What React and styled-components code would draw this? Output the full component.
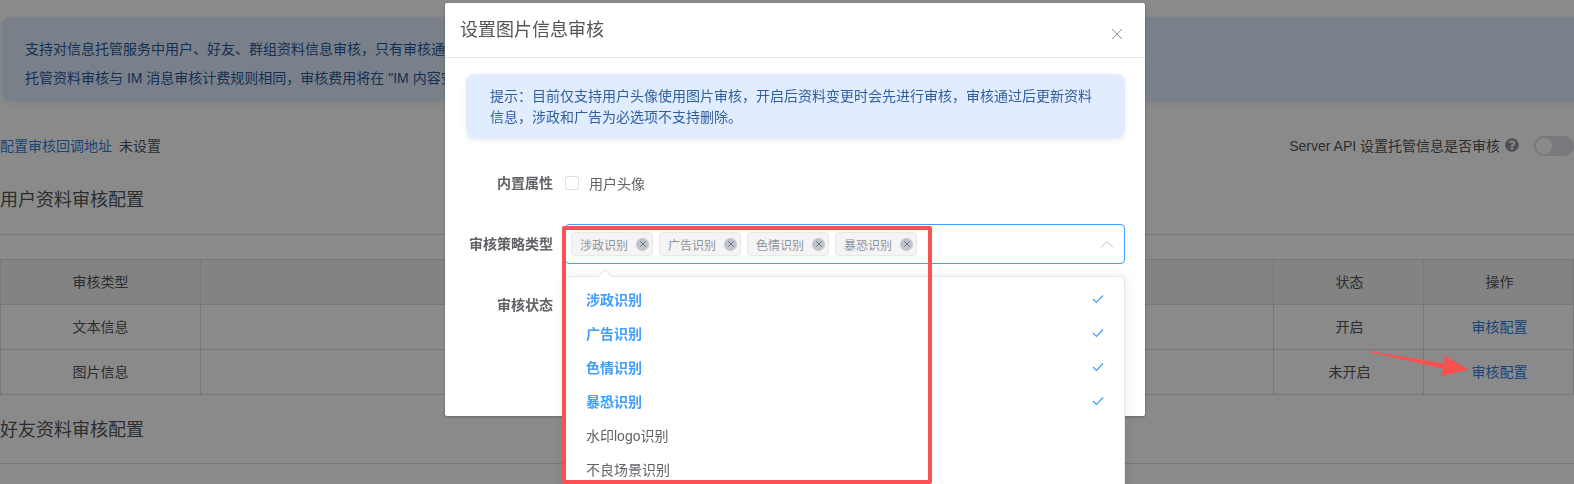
import React from 'react'
import styled, { createGlobalStyle } from 'styled-components'
import { FaQuestionCircle } from 'react-icons/fa'

const tags = ['涉政识别', '广告识别', '色情识别', '暴恐识别']
const options = [
  { label: '涉政识别', selected: true },
  { label: '广告识别', selected: true },
  { label: '色情识别', selected: true },
  { label: '暴恐识别', selected: true },
  { label: '水印logo识别' },
  { label: '不良场景识别' },
]
const rows = [
  { type: '文本信息', status: '开启' },
  { type: '图片信息', status: '未开启' },
]

export default function App() {
  return (
    <>
      <GlobalStyle />
      <Page>
        <Alert>
          <p>支持对信息托管服务中用户、好友、群组资料信息审核，只有审核通过后才会更新资料。</p>
          <p>托管资料审核与 IM 消息审核计费规则相同，审核费用将在 "IM 内容安全" 中统一结算。</p>
        </Alert>
        <ActionRow>
          <CallbackText>
            <TextLink>配置审核回调地址</TextLink>
            <Unset>未设置</Unset>
          </CallbackText>
          <ServerSwitch>
            <span>Server API 设置托管信息是否审核</span>
            <FaQuestionCircle size={14} color="#909399" />
            <Toggle />
          </ServerSwitch>
        </ActionRow>
        <SectionTitle>用户资料审核配置</SectionTitle>
        <Table>
          <colgroup>
            <col width="200" />
            <col />
            <col width="150" />
            <col width="150" />
          </colgroup>
          <thead>
            <tr>
              <th>审核类型</th>
              <th></th>
              <th>状态</th>
              <th>操作</th>
            </tr>
          </thead>
          <tbody>
            {rows.map(r => (
              <tr key={r.type}>
                <td>{r.type}</td>
                <td></td>
                <td>{r.status}</td>
                <td><TableLink>审核配置</TableLink></td>
              </tr>
            ))}
          </tbody>
        </Table>
        <SectionTitle $second>好友资料审核配置</SectionTitle>
      </Page>

      <Overlay>
        <Modal>
          <ModalHeader>
            <ModalTitle>设置图片信息审核</ModalTitle>
            <CloseIcon width="12" height="12" viewBox="0 0 12 12">
              <path d="M1 1l10 10M11 1L1 11" stroke="#909399" strokeWidth="1" fill="none" />
            </CloseIcon>
          </ModalHeader>
          <ModalBody>
            <Tip>提示：目前仅支持用户头像使用图片审核，开启后资料变更时会先进行审核，审核通过后更新资料信息，涉政和广告为必选项不支持删除。</Tip>
            <FormRow>
              <FormLabel>内置属性</FormLabel>
              <CheckOption>
                <CheckBox />
                <span>用户头像</span>
              </CheckOption>
            </FormRow>
            <FormRow>
              <FormLabel>审核策略类型</FormLabel>
              <SelectWrap>
                <SelectBox>
                  {tags.map(t => (
                    <Tag key={t}>
                      <span>{t}</span>
                      <TagClose>
                        <svg width="8" height="8" viewBox="0 0 8 8">
                          <path d="M1 1l6 6M7 1L1 7" stroke="#777a82" strokeWidth="1" fill="none" />
                        </svg>
                      </TagClose>
                    </Tag>
                  ))}
                  <Chevron width="14" height="8" viewBox="0 0 14 8">
                    <path d="M1 7.5L7 1.5l6 6" stroke="#c0c4cc" strokeWidth="1" fill="none" />
                  </Chevron>
                </SelectBox>
                <Dropdown>
                  <Caret />
                  {options.map(o => (
                    <Option key={o.label} $selected={o.selected}>
                      <span>{o.label}</span>
                      {o.selected && (
                        <svg width="12" height="10" viewBox="0 0 12 10">
                          <path d="M1 5l3.5 3.5L11 1.5" stroke="#409eff" strokeWidth="1.2" fill="none" />
                        </svg>
                      )}
                    </Option>
                  ))}
                </Dropdown>
              </SelectWrap>
            </FormRow>
            <FormRow>
              <FormLabel>审核状态</FormLabel>
            </FormRow>
          </ModalBody>
        </Modal>
      </Overlay>

      <RedBox />
      <RedArrow width="110" height="32" viewBox="0 0 110 32">
        <polygon points="3,3 79,15.5 78,7.3 102.5,21.7 74.7,28 77,20.7 3,4" fill="#fb5050" />
      </RedArrow>
    </>
  )
}

const GlobalStyle = createGlobalStyle`
  html, body {
    margin: 0;
    height: 100%;
    overflow: hidden;
    background: #fff;
  }
  body {
    font-family: "Liberation Sans", "Noto Sans CJK SC", sans-serif;
    font-size: 14px;
    color: #606266;
  }
  * { box-sizing: border-box; }
`

const Page = styled.div`
  height: 484px;
  padding-top: 17px;
  overflow: hidden;
`
const Alert = styled.div`
  height: 84px;
  margin-left: 2px;
  margin-right: -10px;
  padding: 18px 23px 0;
  background: #e1edff;
  border-radius: 8px;
  box-shadow: 0 2px 6px rgba(0, 0, 0, 0.08);
  color: #2a5a9a;
  line-height: 28px;
  & p {
    margin: 0 0 1px;
  }
`
const ActionRow = styled.div`
  display: flex;
  justify-content: space-between;
  align-items: center;
  height: 24px;
  margin-top: 33px;
`
const CallbackText = styled.div`
  padding-bottom: 2px;
`
const TextLink = styled.span`
  color: #2f7fe0;
`
const Unset = styled.span`
  margin-left: 7px;
  color: #555;
`
const ServerSwitch = styled.div`
  display: flex;
  align-items: center;
  color: #555;
  & > span {
    padding-bottom: 2px;
  }
  & svg {
    margin: -2px 15px 0 5px;
  }
`
const Toggle = styled.div`
  position: relative;
  width: 40px;
  height: 20px;
  border-radius: 10px;
  background: #dcdfe6;
  &::after {
    content: '';
    position: absolute;
    top: 2px;
    left: 2px;
    width: 16px;
    height: 16px;
    border-radius: 50%;
    background: #fff;
  }
`
const SectionTitle = styled.div`
  height: 49px;
  padding-top: ${props => (props.$second ? '2px' : '1px')};
  margin-top: ${props => (props.$second ? '20px' : '28px')};
  margin-bottom: 24px;
  border-bottom: 1px solid #dcdcdc;
  font-size: 18px;
  line-height: 26px;
  color: #555;
`
const Table = styled.table`
  width: 100%;
  table-layout: fixed;
  border-collapse: collapse;
  border: 1px solid #dcdcdc;
  color: #555;
  & th, & td {
    height: 45px;
    padding: 0 0 2px;
    border: 1px solid #dcdcdc;
    text-align: center;
    font-weight: 400;
  }
  & th:nth-child(n+3), & td:nth-child(n+3) {
    padding-left: 2px;
  }
  & th {
    background: #f2f2f2;
  }
`
const TableLink = styled.span`
  color: #2f7fe0;
`

const Overlay = styled.div`
  position: fixed;
  inset: 0;
  background: rgba(0, 0, 0, 0.46);
`
const Modal = styled.div`
  width: 700px;
  height: 413px;
  margin: 3px 0 0 445px;
  background: #fff;
  border-radius: 2px;
  box-shadow: 0 1px 3px rgba(0, 0, 0, 0.3);
`
const ModalHeader = styled.div`
  position: relative;
  height: 55px;
  padding: 15px 15px 0;
  border-bottom: 1px solid #e4e4e4;
`
const ModalTitle = styled.div`
  font-size: 18px;
  line-height: 24px;
  color: #555;
`
const CloseIcon = styled.svg`
  position: absolute;
  top: 25px;
  right: 22px;
`
const ModalBody = styled.div`
  padding: 16px 20px 0 21px;
`
const Tip = styled.div`
  height: 65px;
  margin-bottom: 24px;
  padding: 12px 24px 0;
  background: #e1edff;
  border-radius: 8px;
  box-shadow: 0 2px 6px rgba(0, 0, 0, 0.06);
  color: #2f5f9e;
  line-height: 21px;
`
const FormRow = styled.div`
  display: flex;
  align-items: flex-start;
  margin-bottom: 21px;
  min-height: 40px;
`
const FormLabel = styled.label`
  width: 87px;
  margin-right: 12px;
  flex: none;
  line-height: 40px;
  text-align: right;
  font-weight: 700;
  color: #606266;
`
const CheckOption = styled.div`
  display: flex;
  align-items: center;
  height: 40px;
  color: #606266;
`
const CheckBox = styled.span`
  width: 14px;
  height: 14px;
  margin-right: 10px;
  background: #fff;
  border: 1px solid #dcdfe6;
  border-radius: 2px;
`
const SelectWrap = styled.div`
  position: relative;
  flex: 1;
`
const SelectBox = styled.div`
  display: flex;
  align-items: center;
  gap: 6px;
  height: 40px;
  padding-left: 5px;
  background: #fff;
  border: 1px solid #409eff;
  border-radius: 4px;
`
const Tag = styled.div`
  display: flex;
  align-items: center;
  justify-content: space-between;
  width: 82px;
  height: 24px;
  padding: 0 3px 0 8px;
  background: #f4f4f5;
  border: 1px solid #e9e9eb;
  border-radius: 4px;
  font-size: 12px;
  color: #909399;
`
const TagClose = styled.span`
  display: flex;
  align-items: center;
  justify-content: center;
  width: 13px;
  height: 13px;
  border-radius: 50%;
  background: #c0c4cc;
`
const Chevron = styled.svg`
  margin-left: auto;
  margin-right: 10px;
`
const Dropdown = styled.div`
  position: absolute;
  top: 52px;
  left: 0;
  right: 0;
  z-index: 2;
  padding: 5px 0;
  background: #fff;
  border: 1px solid #e4e7ed;
  border-radius: 4px;
  box-shadow: 0 2px 12px rgba(0, 0, 0, 0.1);
`
const Caret = styled.span`
  position: absolute;
  top: -6px;
  left: 34px;
  width: 10px;
  height: 10px;
  background: #fff;
  border-top: 1px solid #e4e7ed;
  border-left: 1px solid #e4e7ed;
  transform: rotate(45deg);
`
const Option = styled.div`
  display: flex;
  align-items: center;
  justify-content: space-between;
  height: 34px;
  padding: 0 20px;
  font-weight: ${props => (props.$selected ? 700 : 400)};
  color: ${props => (props.$selected ? '#409eff' : '#606266')};
`
const RedBox = styled.div`
  position: fixed;
  left: 562px;
  top: 226px;
  width: 370px;
  height: 258px;
  border: 4px solid #fb5055;
  border-radius: 2px;
  z-index: 5;
`
const RedArrow = styled.svg`
  position: fixed;
  left: 1366px;
  top: 348px;
  z-index: 5;
`
